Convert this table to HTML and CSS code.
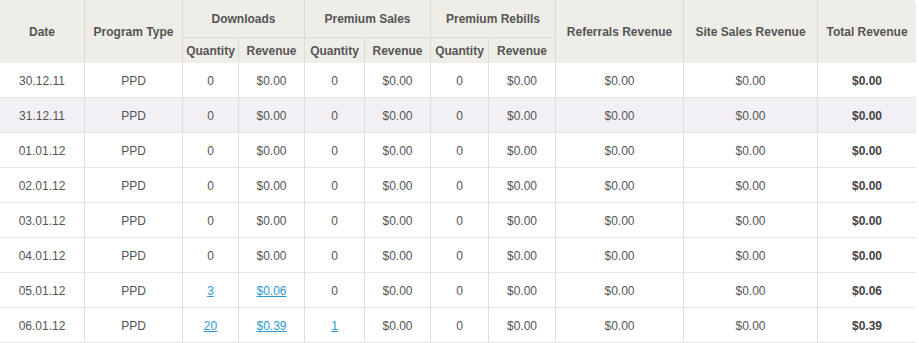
FILE: index.html
```html
<!DOCTYPE html>
<html>
<head>
<meta charset="utf-8">
<link rel="stylesheet" href="styles.css">
</head>
<body>
<table class="stats">
  <colgroup>
    <col class="c-date"><col class="c-type"><col class="c-q1"><col class="c-r1"><col class="c-q2"><col class="c-r2"><col class="c-q3"><col class="c-r3"><col class="c-ref"><col class="c-site"><col class="c-total">
  </colgroup>
  <thead>
    <tr class="h1">
      <th rowspan="2">Date</th>
      <th rowspan="2">Program Type</th>
      <th colspan="2" class="grp">Downloads</th>
      <th colspan="2" class="grp">Premium Sales</th>
      <th colspan="2" class="grp">Premium Rebills</th>
      <th rowspan="2">Referrals Revenue</th>
      <th rowspan="2">Site Sales Revenue</th>
      <th rowspan="2" class="last">Total Revenue</th>
    </tr>
    <tr class="h2">
      <th class="sub">Quantity</th><th class="sub">Revenue</th>
      <th class="sub">Quantity</th><th class="sub">Revenue</th>
      <th class="sub">Quantity</th><th class="sub">Revenue</th>
    </tr>
  </thead>
  <tbody>
    <tr><td>30.12.11</td><td>PPD</td><td>0</td><td>$0.00</td><td>0</td><td>$0.00</td><td>0</td><td>$0.00</td><td>$0.00</td><td>$0.00</td><td class="total">$0.00</td></tr>
    <tr class="hl"><td>31.12.11</td><td>PPD</td><td>0</td><td>$0.00</td><td>0</td><td>$0.00</td><td>0</td><td>$0.00</td><td>$0.00</td><td>$0.00</td><td class="total">$0.00</td></tr>
    <tr><td>01.01.12</td><td>PPD</td><td>0</td><td>$0.00</td><td>0</td><td>$0.00</td><td>0</td><td>$0.00</td><td>$0.00</td><td>$0.00</td><td class="total">$0.00</td></tr>
    <tr><td>02.01.12</td><td>PPD</td><td>0</td><td>$0.00</td><td>0</td><td>$0.00</td><td>0</td><td>$0.00</td><td>$0.00</td><td>$0.00</td><td class="total">$0.00</td></tr>
    <tr><td>03.01.12</td><td>PPD</td><td>0</td><td>$0.00</td><td>0</td><td>$0.00</td><td>0</td><td>$0.00</td><td>$0.00</td><td>$0.00</td><td class="total">$0.00</td></tr>
    <tr><td>04.01.12</td><td>PPD</td><td>0</td><td>$0.00</td><td>0</td><td>$0.00</td><td>0</td><td>$0.00</td><td>$0.00</td><td>$0.00</td><td class="total">$0.00</td></tr>
    <tr><td>05.01.12</td><td>PPD</td><td><a href="#">3</a></td><td><a href="#">$0.06</a></td><td>0</td><td>$0.00</td><td>0</td><td>$0.00</td><td>$0.00</td><td>$0.00</td><td class="total">$0.06</td></tr>
    <tr><td>06.01.12</td><td>PPD</td><td><a href="#">20</a></td><td><a href="#">$0.39</a></td><td><a href="#">1</a></td><td>$0.00</td><td>0</td><td>$0.00</td><td>$0.00</td><td>$0.00</td><td class="total">$0.39</td></tr>
  </tbody>
</table>
</body>
</html>
```
FILE: styles.css
```css
html, body {
  margin: 0;
  padding: 0;
  background: #ffffff;
}
.stats {
  width: 916px;
  table-layout: fixed;
  border-collapse: separate;
  border-spacing: 0;
  font-family: "Liberation Sans", Arial, sans-serif;
  font-size: 12px;
  color: #555555;
}
.c-date { width: 85px; }
.c-type { width: 98px; }
.c-q1 { width: 56px; }
.c-r1 { width: 66px; }
.c-q2 { width: 60px; }
.c-r2 { width: 66px; }
.c-q3 { width: 58px; }
.c-r3 { width: 67px; }
.c-ref { width: 128px; }
.c-site { width: 134px; }
.c-total { width: 98px; }

.stats th, .stats td {
  padding: 0;
  text-align: center;
  vertical-align: middle;
  border-right: 1px solid #e1dfdb;
  border-bottom: 1px solid #e6e5e3;
}
.stats th.last, .stats td.total { border-right: none; }
.stats thead th {
  background: #efede8;
  font-weight: bold;
  color: #555555;
  border-bottom: none;
  border-right-color: #dddbd6;
}
.stats thead th.grp {
  height: 37px;
  border-bottom: 1px solid #dddbd6;
}
.stats thead th.sub {
  height: 24px;
  padding-top: 1px;
}
.stats thead th.last { border-top-right-radius: 5px; }
.stats tbody tr { height: 35px; }
.stats tbody td { padding-top: 2px; }
.stats tbody tr.hl td { background: #f3f0f5; }
.stats td.total { font-weight: bold; color: #444444; }
.stats a { color: #2a9ad0; text-decoration: underline; }
```
